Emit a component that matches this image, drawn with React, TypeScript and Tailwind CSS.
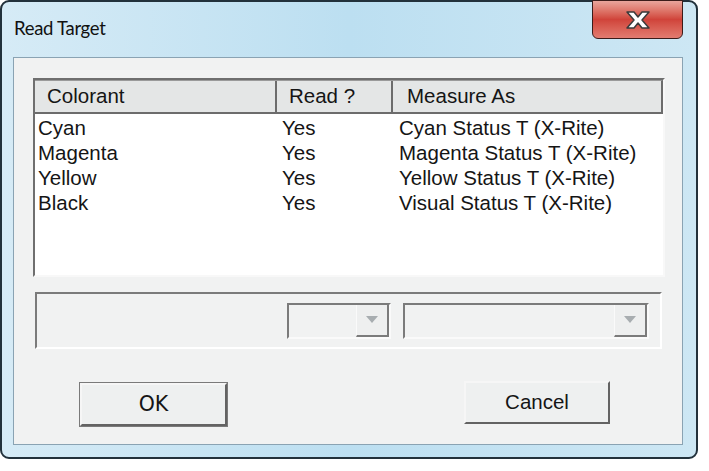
const rows = [
  ['Cyan', 'Yes', 'Cyan Status T (X-Rite)'],
  ['Magenta', 'Yes', 'Magenta Status T (X-Rite)'],
  ['Yellow', 'Yes', 'Yellow Status T (X-Rite)'],
  ['Black', 'Yes', 'Visual Status T (X-Rite)'],
]

function Arrow() {
  return (
    <svg width="12" height="7" viewBox="0 0 12 7">
      <path d="M0 0 H12 L6 7 Z" fill="#a8adb0" />
    </svg>
  )
}

function Combo({ width }: { width: string }) {
  return (
    <div className={`flex h-[36px] ${width} border-2 border-t-[#7b7b7b] border-l-[#7b7b7b] border-b-[#fafafa] border-r-[#fafafa] bg-[#f1f2f2]`}>
      <div className="flex-1" />
      <div className="flex w-[33px] items-center justify-center border-l border-l-[#fafafa] border-b-2 border-b-[#7b7b7b] border-r-2 border-r-[#7b7b7b] bg-[#eeefef]">
        <Arrow />
      </div>
    </div>
  )
}

export default function App() {
  return (
    <div className="w-[709px] h-[471px] bg-white font-['Liberation_Sans',Arial,sans-serif] text-[#151515]">
      <div className="flex flex-col w-[698px] h-[459px] rounded-[9px] border-2 border-[#22313b] bg-gradient-to-r from-[#d6ebf6] via-[#bcdff1] to-[#cde7f4]">
        {/* title bar */}
        <div className="relative h-[55px] flex items-start">
          <span className="ml-[12px] mt-[14px] text-[18.5px] leading-[24px] font-['Lato',sans-serif] text-[#111] tracking-[-0.3px]">Read Target</span>
          <div className="absolute right-[13px] top-[-2px] w-[91px] h-[39px] rounded-b-[6px] border border-[#3b1c1a] bg-gradient-to-b from-[#e8a59c] via-[#d0433a] to-[#e27b70] flex items-center justify-center">
            <svg width="28" height="20" viewBox="0 0 28 20">
              <path d="M3 2 L10 2 L14 7 L18 2 L25 2 L18 10 L25 18 L18 18 L14 13 L10 18 L3 18 L10 10 Z" fill="#fff" stroke="#3a3a3a" strokeWidth="1.5" strokeLinejoin="round" />
            </svg>
          </div>
        </div>

        {/* client area */}
        <div className="flex-1 ml-[11px] mr-[13px] mb-[12px] border border-[#8aa3b3] bg-[#f1f2f2] pl-[19px] pr-[17px] pt-[20px] text-[20.5px]">
          {/* list view */}
          <div className="h-[199px] border-2 border-t-[#6f6f6f] border-l-[#6f6f6f] border-b-[#f8f8f8] border-r-[#f8f8f8] bg-white">
            <div className="flex h-[34px] w-[628px] bg-[#e4e6e6] border-t border-[#9a9a9a] border-b-2 border-b-[#6c6c6c] border-r-2 border-r-[#6c6c6c] leading-[30px]">
              <div className="w-[242px] pl-[12px] border-r-2 border-[#6c6c6c]">Colorant</div>
              <div className="w-[116px] pl-[12px] border-r-2 border-[#6c6c6c]">Read ?</div>
              <div className="flex-1 pl-[14px]">Measure As</div>
            </div>
            <div className="pt-[1px]">
              {rows.map(r => (
                <div key={r[0]} className="flex h-[25px] leading-[25px]">
                  <div className="w-[242px] pl-[3px]">{r[0]}</div>
                  <div className="w-[116px] pl-[5px]">{r[1]}</div>
                  <div className="flex-1 pl-[6px]">{r[2]}</div>
                </div>
              ))}
            </div>
          </div>

          {/* edit row */}
          <div className="mt-[15px] ml-[2px] flex items-center w-[627px] h-[57px] border-2 border-t-[#7b7b7b] border-l-[#7b7b7b] border-b-white border-r-white">
            <div className="ml-[250px]">
              <Combo width="w-[104px]" />
            </div>
            <div className="ml-[12px]">
              <Combo width="w-[246px]" />
            </div>
          </div>

          {/* buttons */}
          <div className="flex justify-between mt-[34px] pl-[47px] pr-[55px]">
            <button className="w-[147px] h-[43px] border-2 border-t-[#f6f6f6] border-l-[#f6f6f6] border-b-[#636363] border-r-[#636363] outline outline-1 outline-[#7a7a7a] bg-[#eef0f0] text-[20.5px] font-['DejaVu_Sans',sans-serif]">OK</button>
            <button className="w-[146px] h-[43px] -mt-[2px] border-2 border-t-[#f6f6f6] border-l-[#f6f6f6] border-b-[#636363] border-r-[#636363] bg-[#eef0f0] text-[20.5px]">Cancel</button>
          </div>
        </div>
      </div>
    </div>
  )
}
